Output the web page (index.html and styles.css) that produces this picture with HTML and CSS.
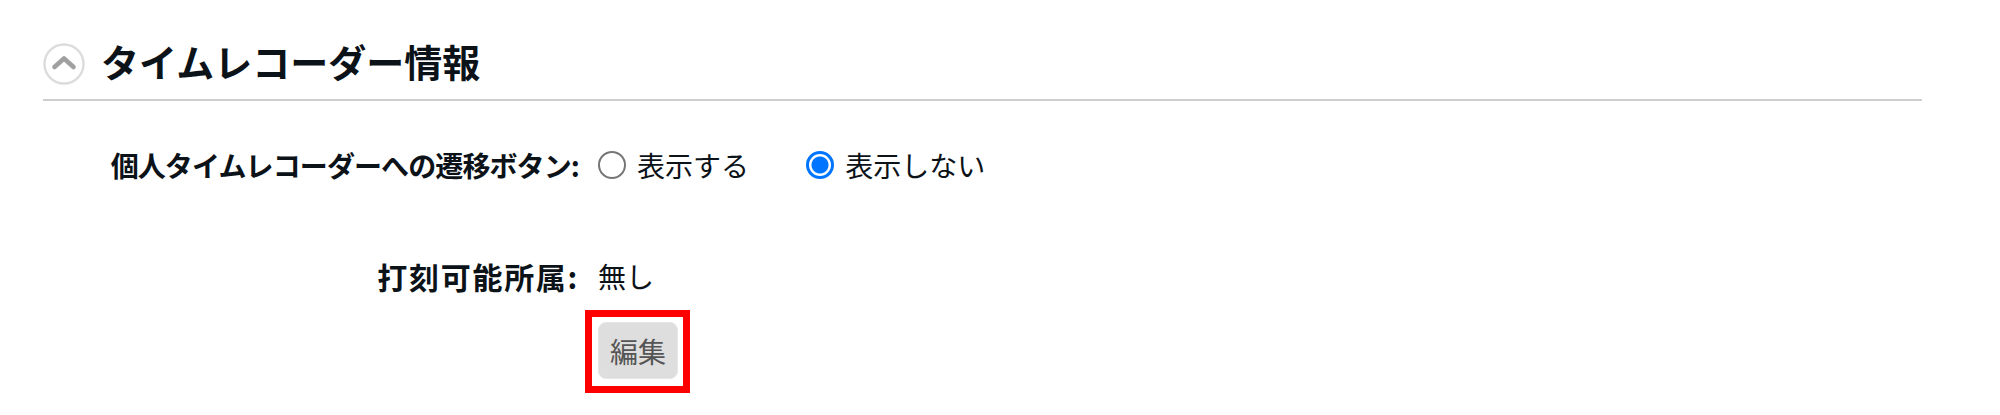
FILE: index.html
```html
<!DOCTYPE html>
<html lang="ja">
<head>
  <meta charset="UTF-8">
  <title>タイムレコーダー情報</title>
  <link rel="stylesheet" href="styles.css">
</head>
<body>
  <section class="panel">
    <div class="panel-header">
      <svg class="toggle-icon" viewBox="0 0 42 42" aria-hidden="true">
        <circle cx="21" cy="21" r="19.5" fill="#fff" stroke="#dcdcdc" stroke-width="2.4"/>
        <path d="M11.5 24 L21 15.5 L30.5 24" fill="none" stroke="#a0a0a0" stroke-width="4.6" stroke-linecap="round" stroke-linejoin="round"/>
      </svg>
      <h2>タイムレコーダー情報</h2>
    </div>

    <div class="form-row row-radio">
      <label class="row-label label-narrow">個人タイムレコーダーへの遷移ボタン:</label>
      <div class="row-value">
        <label class="radio-item"><input type="radio" name="recorder_button"> 表示する</label>
        <label class="radio-item"><input type="radio" name="recorder_button" checked> 表示しない</label>
      </div>
    </div>

    <div class="form-row row-dept">
      <label class="row-label label-wide">打刻可能所属:</label>
      <div class="row-value">無し</div>
    </div>

    <div class="form-row">
      <div class="row-label"></div>
      <div class="row-value">
        <div class="highlight-box">
          <button type="button" class="edit-btn">編集</button>
        </div>
      </div>
    </div>
  </section>
</body>
</html>
```

FILE: styles.css
```css
body {
  margin: 0;
  font-family: "Noto Sans CJK JP", sans-serif;
  font-size: 28px;
  color: #0b1218;
  background: #fff;
}

.panel {
  width: 1879px;
  margin-left: 43px;
  padding-top: 39px;
}

.panel-header {
  display: flex;
  align-items: center;
  gap: 16px;
  height: 50px;
  padding-bottom: 10px;
  border-bottom: 2px solid #cfcfcf;
}

.toggle-icon {
  width: 42px;
  height: 42px;
}

.panel-header h2 {
  margin: -6px 0 0;
  font-size: 38px;
  font-weight: 700;
  line-height: 60px;
}

.form-row {
  display: flex;
}

.row-label {
  width: 536px;
  text-align: right;
  font-weight: 700;
  flex-shrink: 0;
}

.label-narrow {
  letter-spacing: -0.9px;
}

.label-wide {
  font-size: 30px;
  letter-spacing: 1.7px;
}

.row-value {
  margin-left: 19px;
}

.row-radio {
  margin-top: 43px;
  line-height: 42px;
}

.row-dept {
  margin-top: 67px;
  line-height: 42px;
}

.radio-item {
  display: inline-flex;
  align-items: center;
  gap: 11px;
  margin-right: 51px;
}

.radio-item input {
  appearance: none;
  width: 28px;
  height: 28px;
  margin: 0;
  border: 2px solid #767676;
  border-radius: 50%;
  background: #fff;
}

.radio-item input:checked {
  border: 3px solid #0075ff;
  background: radial-gradient(circle, #0075ff 0, #0075ff 8px, #fff 9px);
}

.highlight-box {
  display: inline-block;
  margin: 13px 0 0 -13px;
  padding: 5px 5px 7px 6px;
  border: 7px solid #ff0000;
}

.edit-btn {
  display: block;
  width: 80px;
  height: 57px;
  padding: 0;
  font-family: inherit;
  font-size: 28px;
  color: #555;
  background: #dedede;
  border: 1px solid #e6e6e6;
  border-radius: 8px;
}
```
